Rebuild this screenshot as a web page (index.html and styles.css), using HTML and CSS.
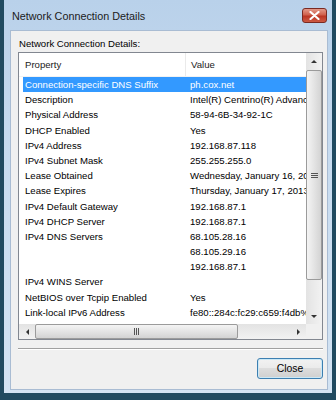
FILE: index.html
```html
<!DOCTYPE html>
<html lang="en">
<head>
  <meta charset="UTF-8" />
  <title>Network Connection Details</title>
  <link rel="stylesheet" href="styles.css">
</head>
<body>
  <div class="window">
    <!-- Title bar -->
    <div class="titlebar">
      <span class="title">Network Connection Details</span>
      <button class="close-x" aria-label="Close">
        <svg width="11" height="9" viewBox="0 0 11 9">
          <path d="M1.5 1 L9.5 8 M9.5 1 L1.5 8" stroke="#fff" stroke-width="2.2" stroke-linecap="round" />
        </svg>
      </button>
    </div>

    <!-- Client area -->
    <div class="client">
      <div class="caption">Network Connection Details:</div>

      <div class="listbox">
        <div class="viewport">
          <div class="row head">
            <span class="prop">Property</span>
            <span class="val">Value</span>
          </div>
          <div class="row selected"><span class="prop">Connection-specific DNS Suffix</span><span class="val">ph.cox.net</span></div>
          <div class="row"><span class="prop">Description</span><span class="val">Intel(R) Centrino(R) Advanced-N 6205</span></div>
          <div class="row"><span class="prop">Physical Address</span><span class="val">58-94-6B-34-92-1C</span></div>
          <div class="row"><span class="prop">DHCP Enabled</span><span class="val">Yes</span></div>
          <div class="row"><span class="prop">IPv4 Address</span><span class="val">192.168.87.118</span></div>
          <div class="row"><span class="prop">IPv4 Subnet Mask</span><span class="val">255.255.255.0</span></div>
          <div class="row"><span class="prop">Lease Obtained</span><span class="val">Wednesday, January 16, 2013 9:12:44 PM</span></div>
          <div class="row"><span class="prop">Lease Expires</span><span class="val">Thursday, January 17, 2013 9:12:44 PM</span></div>
          <div class="row"><span class="prop">IPv4 Default Gateway</span><span class="val">192.168.87.1</span></div>
          <div class="row"><span class="prop">IPv4 DHCP Server</span><span class="val">192.168.87.1</span></div>
          <div class="row"><span class="prop">IPv4 DNS Servers</span><span class="val">68.105.28.16</span></div>
          <div class="row"><span class="prop"></span><span class="val">68.105.29.16</span></div>
          <div class="row"><span class="prop"></span><span class="val">192.168.87.1</span></div>
          <div class="row"><span class="prop">IPv4 WINS Server</span><span class="val"></span></div>
          <div class="row"><span class="prop">NetBIOS over Tcpip Enabled</span><span class="val">Yes</span></div>
          <div class="row"><span class="prop">Link-local IPv6 Address</span><span class="val">fe80::284c:fc29:c659:f4db%11</span></div>
          <div class="row"><span class="prop">IPv6 Default Gateway</span><span class="val"></span></div>
        </div>

        <!-- Vertical scrollbar -->
        <div class="vscroll">
          <div class="arrow"><span class="tri up"></span></div>
          <div class="vtrack">
            <div class="vthumb"><span class="grip-h"></span></div>
          </div>
          <div class="arrow"><span class="tri down"></span></div>
        </div>

        <!-- Horizontal scrollbar -->
        <div class="hscroll">
          <div class="arrow"><span class="tri left"></span></div>
          <div class="htrack">
            <div class="hthumb"><span class="grip-v"></span></div>
          </div>
          <div class="arrow"><span class="tri right"></span></div>
        </div>
        <div class="corner"></div>
      </div>

      <div class="separator"></div>

      <div class="buttons">
        <button class="btn">Close</button>
      </div>
    </div>
  </div>
</body>
</html>
```

FILE: styles.css
```css
/* Global */
body {
  margin: 0;
  background-color: #204a60;
  font-family: 'Liberation Sans', Arial, sans-serif;
  font-size: 9.6px;
  color: #000;
}

/* Window frame */
.window {
  margin: 0 4px;
  height: 393px;
  background: linear-gradient(180deg, #b9d1ea 0%, #c7dbef 40%, #d3e3f3 100%);
  display: flex;
  flex-direction: column;
}

.titlebar {
  height: 30px;
  display: flex;
  align-items: center;
  justify-content: space-between;
  padding: 0 5px 0 8px;
}

.title {
  font-size: 10.8px;
  color: #1b1b1b;
  margin-top: 2px;
}

.close-x {
  width: 25px;
  height: 15px;
  padding: 0;
  border: 1px solid #7a2a22;
  border-radius: 3px;
  background: linear-gradient(180deg, #e49a8a 0%, #d0604c 45%, #bc3523 55%, #cc5a44 100%);
  display: flex;
  align-items: center;
  justify-content: center;
}

/* Client area */
.client {
  margin: 0 4px 0 6px;
  height: 360px;
  background-color: #f0f0f0;
  border: 1px solid #a9bcd3;
  box-sizing: border-box;
}

.caption {
  padding: 5px 0 0 8px;
  height: 16px;
  line-height: 16px;
}

/* List box */
.listbox {
  margin: 0 4px 0 7px;
  height: 288px;
  border: 1px solid #828790;
  background: #fff;
  display: grid;
  grid-template-columns: 1fr 16px;
  grid-template-rows: 1fr 15px;
  box-sizing: border-box;
}

.viewport {
  overflow: hidden;
  padding-left: 4px;
}

.row {
  display: flex;
  height: 15.2px;
  line-height: 15px;
  white-space: nowrap;
}

.row .prop {
  width: 163px;
  flex: none;
  padding-left: 2px;
}

.row .val {
  padding-left: 2px;
}

.row.head {
  height: 23px;
  line-height: 23px;
  margin-left: -4px;
  padding-left: 4px;
  color: #222;
  border-bottom: 1px solid #f2f2f2;
}

.row.head .prop {
  border-right: 1px solid #eaeaea;
  width: 160px;
  margin-right: 3px;
}

.row.selected {
  background-color: #3399ff;
  color: #fff;
}

/* Scrollbars */
.vscroll {
  display: flex;
  flex-direction: column;
  background: linear-gradient(90deg, #e3e3e3, #f2f2f2);
}

.hscroll {
  display: flex;
  background: linear-gradient(180deg, #e3e3e3, #f2f2f2);
}

.arrow {
  width: 16px;
  height: 15px;
  flex: none;
  display: flex;
  align-items: center;
  justify-content: center;
}

.vscroll .arrow {
  height: 16px;
}

.vtrack,
.htrack {
  flex: 1;
  display: flex;
}

.vtrack {
  flex-direction: column;
  padding-bottom: 28px;
}

.htrack {
  padding-right: 52px;
}

.vthumb,
.hthumb {
  flex: 1;
  border: 1px solid #9b9b9b;
  border-radius: 2px;
  display: flex;
  align-items: center;
  justify-content: center;
}

.vthumb {
  margin-top: 1px;
  background: linear-gradient(90deg, #f4f4f4 0%, #e4e4e4 50%, #d3d3d3 100%);
}

.hthumb {
  background: linear-gradient(180deg, #f4f4f4 0%, #e4e4e4 50%, #d3d3d3 100%);
}

.grip-h {
  width: 7px;
  height: 5px;
  border-top: 1px solid #555;
  border-bottom: 1px solid #555;
  box-sizing: border-box;
  background: linear-gradient(180deg, transparent 40%, #555 40%, #555 60%, transparent 60%);
}

.grip-v {
  width: 5px;
  height: 7px;
  border-left: 1px solid #555;
  border-right: 1px solid #555;
  box-sizing: border-box;
  background: linear-gradient(90deg, transparent 40%, #555 40%, #555 60%, transparent 60%);
}

.tri {
  width: 0;
  height: 0;
  border: 3px solid transparent;
}

.tri.up { border-bottom-color: #333; border-top-width: 0; }
.tri.down { border-top-color: #333; border-bottom-width: 0; }
.tri.left { border-right-color: #333; border-left-width: 0; }
.tri.right { border-left-color: #333; border-right-width: 0; }

.corner {
  background: #f0f0f0;
}

/* Bottom of dialog */
.separator {
  margin: 8px 4px 0 7px;
  border-top: 1px solid #a0a0a0;
  border-bottom: 1px solid #fff;
}

.buttons {
  display: flex;
  justify-content: flex-end;
  padding: 8px 4px 0 0;
}

.btn {
  width: 66px;
  height: 21px;
  font-family: 'Liberation Sans', Arial, sans-serif;
  font-size: 10.4px;
  color: #000;
  border: 1px solid #3c7fb1;
  border-radius: 3px;
  background: linear-gradient(180deg, #f2f2f2 0%, #ebebeb 45%, #dddddd 50%, #cfcfcf 100%);
  box-shadow: inset 0 0 0 1px #cbe8f6;
  padding: 0;
}
```
